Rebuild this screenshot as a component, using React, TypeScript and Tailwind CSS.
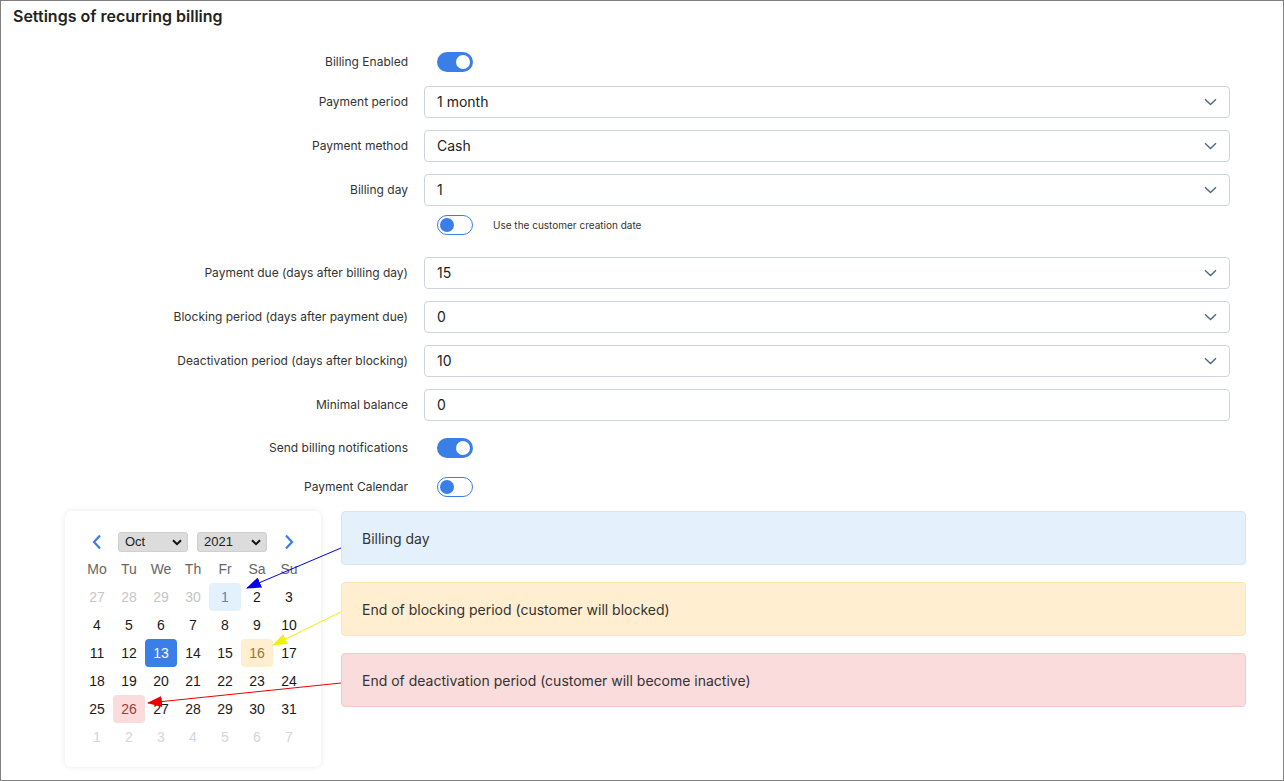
import React from 'react';

const font = { fontFamily: 'Inter, "Noto Sans", sans-serif' };
const calFont = { fontFamily: '"Liberation Sans", Arial, sans-serif' };

function Toggle({ on }: { on: boolean }) {
    return on ? (
        <div className="w-[36px] h-[20px] rounded-full bg-[#3a7ee8] flex items-center justify-end pr-[3px]">
            <div className="w-[14px] h-[14px] rounded-full bg-white" />
        </div>
    ) : (
        <div className="w-[36px] h-[20px] rounded-full bg-white border border-[#3a7ee8] flex items-center pl-[2px]">
            <div className="w-[14px] h-[14px] rounded-full bg-[#3a7ee8]" />
        </div>
    );
}

function Chevron() {
    return (
        <svg width="13" height="8" viewBox="0 0 13 8" fill="none">
            <path d="M1 1.2 L6.5 6.5 L12 1.2" stroke="#4f6a85" strokeWidth="1.4" />
        </svg>
    );
}

function Row({ label, children, className = '' }: { label: string; children: React.ReactNode; className?: string }) {
    return (
        <div className={`flex items-center ${className}`}>
            <div className="w-[407px] text-right text-[12px] leading-[16px] text-[#333]">{label}</div>
            <div className="ml-[16px]">{children}</div>
        </div>
    );
}

function Field({ value, select = true }: { value: string; select?: boolean }) {
    return (
        <div className="w-[806px] h-[32px] border border-[#ced4da] rounded-[4px] flex items-center justify-between pl-[12px] pr-[12px] text-[14px] leading-[18px] pb-[1px] text-[#222]">
            <span>{value}</span>
            {select && <Chevron />}
        </div>
    );
}

function MiniSelect({ value }: { value: string }) {
    return (
        <div className="w-[70px] h-[20px] bg-[#dcdcdc] rounded-[3px] border border-[#cfcfcf] flex items-center justify-between pl-[6px] pr-[5px] text-[13px] text-[#222]">
            <span>{value}</span>
            <svg width="10" height="7" viewBox="0 0 10 7" fill="none">
                <path d="M1 1.2 L5 5.2 L9 1.2" stroke="#111" strokeWidth="2" />
            </svg>
        </div>
    );
}

type Day = { n: number; muted?: 'prev' | 'next'; tone?: 'blue' | 'today' | 'yellow' | 'red' };

const weeks: Day[][] = [
    [{ n: 27, muted: 'prev' }, { n: 28, muted: 'prev' }, { n: 29, muted: 'prev' }, { n: 30, muted: 'prev' }, { n: 1, tone: 'blue' }, { n: 2 }, { n: 3 }],
    [{ n: 4 }, { n: 5 }, { n: 6 }, { n: 7 }, { n: 8 }, { n: 9 }, { n: 10 }],
    [{ n: 11 }, { n: 12 }, { n: 13, tone: 'today' }, { n: 14 }, { n: 15 }, { n: 16, tone: 'yellow' }, { n: 17 }],
    [{ n: 18 }, { n: 19 }, { n: 20 }, { n: 21 }, { n: 22 }, { n: 23 }, { n: 24 }],
    [{ n: 25 }, { n: 26, tone: 'red' }, { n: 27 }, { n: 28 }, { n: 29 }, { n: 30 }, { n: 31 }],
    [1, 2, 3, 4, 5, 6, 7].map(n => ({ n, muted: 'next' as const })),
];

function dayClass(d: Day) {
    if (d.tone === 'blue') return 'bg-[#e3f1fd] text-[#5b87ad]';
    if (d.tone === 'today') return 'bg-[#3a7ee8] text-white';
    if (d.tone === 'yellow') return 'bg-[#ffeecf] text-[#9a7440]';
    if (d.tone === 'red') return 'bg-[#fadcdc] text-[#9a3d3d]';
    if (d.muted === 'prev') return 'text-[#c6c6c6]';
    if (d.muted === 'next') return 'text-[#cfd6df]';
    return 'text-[#1a1a1a]';
}

function Calendar() {
    return (
        <div className="w-[256px] rounded-[6px] bg-white shadow-[0_0_6px_rgba(0,0,0,0.09)] px-[16px] pt-[21px] pb-[16px]" style={calFont}>
            <div className="flex items-center h-[20px]">
                <div className="w-[32px] flex justify-center">
                    <svg width="10" height="16" viewBox="0 0 10 16" fill="none">
                        <path d="M8 1.5 L2 8 L8 14.5" stroke="#3a7ee8" strokeWidth="2.2" />
                    </svg>
                </div>
                <div className="ml-[5px]"><MiniSelect value="Oct" /></div>
                <div className="ml-[9px]"><MiniSelect value="2021" /></div>
                <div className="ml-[6px] w-[32px] flex justify-center">
                    <svg width="10" height="16" viewBox="0 0 10 16" fill="none">
                        <path d="M2 1.5 L8 8 L2 14.5" stroke="#3a7ee8" strokeWidth="2.2" />
                    </svg>
                </div>
            </div>
            <div className="grid grid-cols-7 mt-[3px]">
                {['Mo', 'Tu', 'We', 'Th', 'Fr', 'Sa', 'Su'].map(d => (
                    <div key={d} className="h-[28px] flex items-center justify-center text-[14px] text-[#666]">{d}</div>
                ))}
                {weeks.flat().map((d, i) => (
                    <div key={i} className={`h-[28px] flex items-center justify-center text-[14px] rounded-[4px] ${dayClass(d)}`}>
                        {d.n}
                    </div>
                ))}
            </div>
        </div>
    );
}

function Legend({ text, className }: { text: string; className: string }) {
    return (
        <div className={`w-[905px] h-[54px] rounded-[4px] border flex items-center pl-[20px] text-[14px] text-[#333] ${className}`}>
            {text}
        </div>
    );
}

export default function App() {
    return (
        <div className="relative w-[1284px] h-[781px] border border-[#808080] bg-white overflow-hidden" style={font}>
            <h1 className="pl-[12px] pt-[5px] text-[16px] leading-[20px] font-semibold text-[#222]">
                Settings of recurring billing
            </h1>

            <Row label="Billing Enabled" className="h-[32px] mt-[20px]"><div className="ml-[13px]"><Toggle on /></div></Row>
            <Row label="Payment period" className="mt-[8px]"><Field value="1 month" /></Row>
            <Row label="Payment method" className="mt-[12px]"><Field value="Cash" /></Row>
            <Row label="Billing day" className="mt-[12px]"><Field value="1" /></Row>
            <div className="flex items-center h-[20px] mt-[9px] ml-[436px]">
                <Toggle on={false} />
                <span className="ml-[20px] text-[10px] text-[#333]">Use the customer creation date</span>
            </div>
            <Row label="Payment due (days after billing day)" className="mt-[22px]"><Field value="15" /></Row>
            <Row label="Blocking period (days after payment due)" className="mt-[12px]"><Field value="0" /></Row>
            <Row label="Deactivation period (days after blocking)" className="mt-[12px]"><Field value="10" /></Row>
            <Row label="Minimal balance" className="mt-[12px]"><Field value="0" select={false} /></Row>
            <Row label="Send billing notifications" className="h-[32px] mt-[11px]"><div className="ml-[13px]"><Toggle on /></div></Row>
            <Row label="Payment Calendar" className="h-[32px] mt-[7px]"><div className="ml-[13px]"><Toggle on={false} /></div></Row>

            <div className="flex mt-[8px] ml-[64px] gap-[20px]">
                <Calendar />
                <div className="flex flex-col gap-[17px]">
                    <Legend text="Billing day" className="bg-[#e4f1fd] border-[#d2e5fa]" />
                    <Legend text="End of blocking period (customer will blocked)" className="bg-[#ffeecf] border-[#fde4b4]" />
                    <Legend text="End of deactivation period (customer will become inactive)" className="bg-[#fadcdd] border-[#f5c8c9]" />
                </div>
            </div>

            {/* annotation arrows */}
            <svg className="absolute left-[-1px] top-[-1px] pointer-events-none" width="1284" height="781">
                <defs>
                    <marker id="mb" markerWidth="15" markerHeight="11" refX="14" refY="5.5" orient="auto" markerUnits="userSpaceOnUse">
                        <path d="M0,0 L15,5.5 L0,11 z" fill="#0000ee" />
                    </marker>
                    <marker id="my" markerWidth="15" markerHeight="11" refX="14" refY="5.5" orient="auto" markerUnits="userSpaceOnUse">
                        <path d="M0,0 L15,5.5 L0,11 z" fill="#f2f200" />
                    </marker>
                    <marker id="mr" markerWidth="15" markerHeight="11" refX="14" refY="5.5" orient="auto" markerUnits="userSpaceOnUse">
                        <path d="M0,0 L15,5.5 L0,11 z" fill="#ee0000" />
                    </marker>
                </defs>
                <line x1="341" y1="548" x2="247" y2="588" stroke="#0000ee" strokeWidth="1" markerEnd="url(#mb)" />
                <line x1="341" y1="612" x2="273" y2="645" stroke="#f2f200" strokeWidth="1" markerEnd="url(#my)" />
                <line x1="341" y1="683" x2="148" y2="703" stroke="#ee0000" strokeWidth="1" markerEnd="url(#mr)" />
            </svg>
        </div>
    );
}
